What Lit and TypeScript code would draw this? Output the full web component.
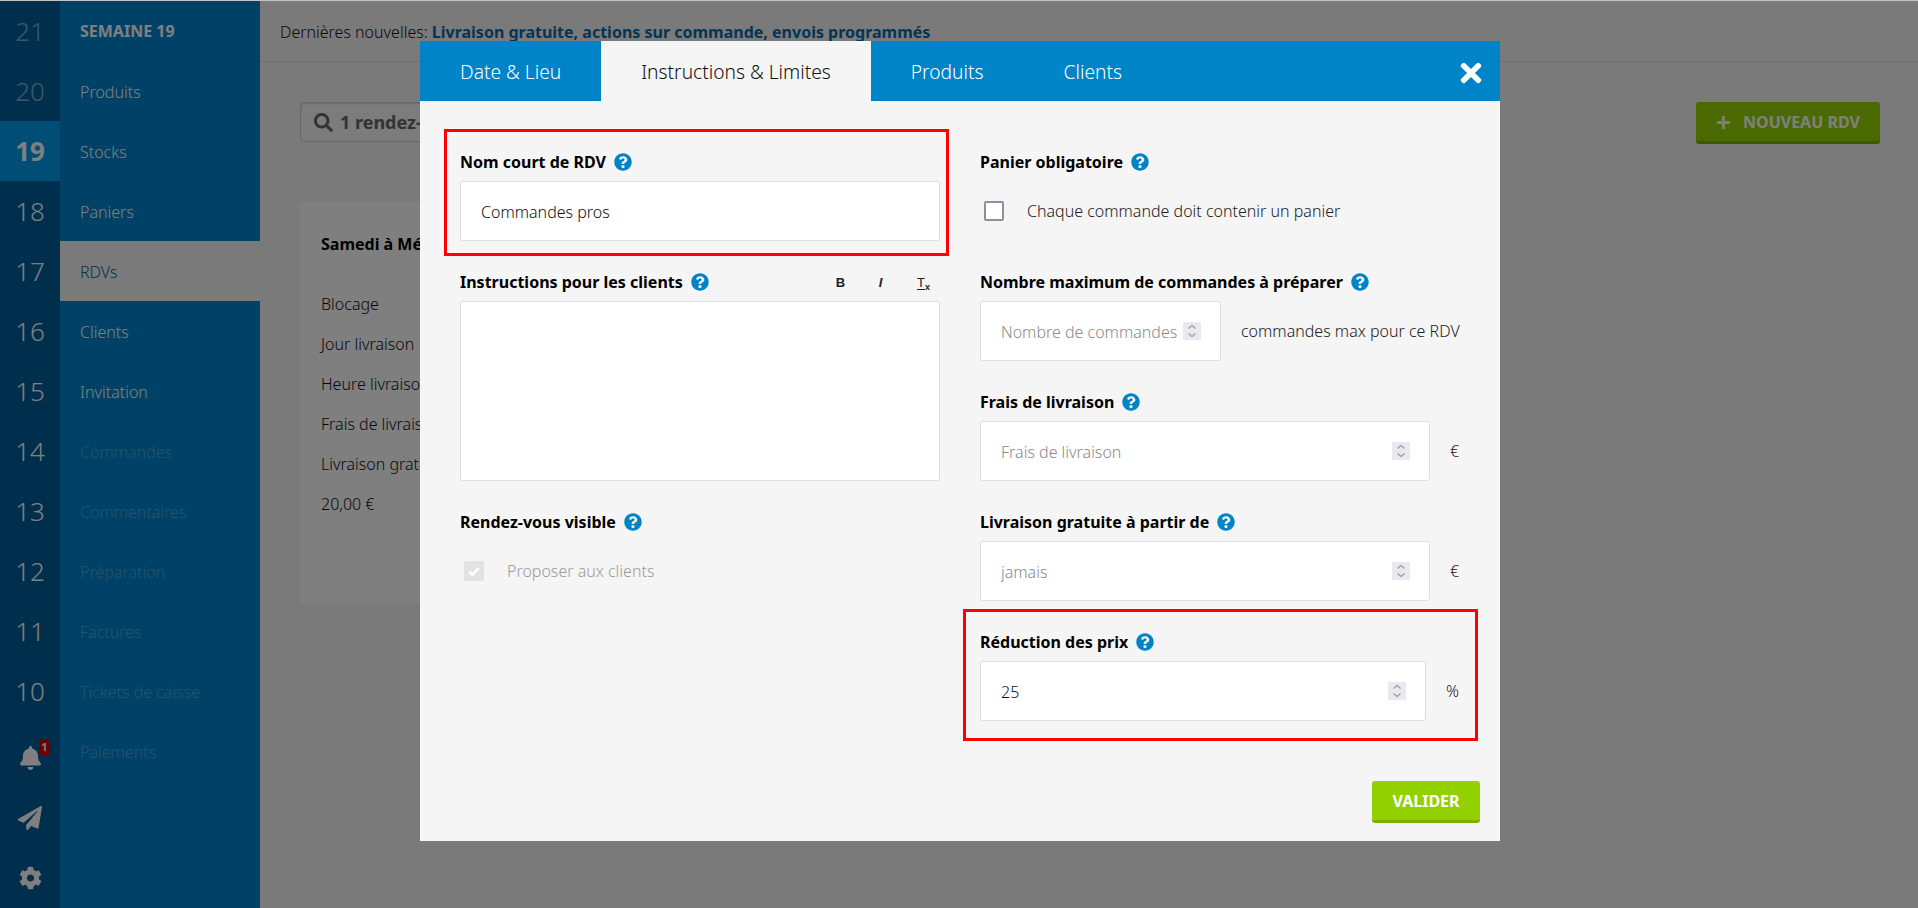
import { LitElement, html, css, svg } from "lit";
import { customElement } from "lit/decorators.js";

const Q = "M504 256c0 136.997-111.043 248-248 248S8 392.997 8 256C8 119.083 119.043 8 256 8s248 111.083 248 248zM262.655 90c-54.497 0-89.255 22.957-116.549 63.758-3.536 5.286-2.353 12.415 2.715 16.258l34.699 26.31c5.205 3.947 12.621 3.008 16.665-2.122 17.864-22.658 30.113-35.797 57.303-35.797 20.429 0 45.698 13.148 45.698 32.958 0 14.976-12.363 22.667-32.534 33.976C247.128 238.528 216 254.941 216 296v4c0 6.627 5.373 12 12 12h56c6.627 0 12-5.373 12-12v-1.333c0-28.462 83.186-29.647 83.186-106.667 0-58.002-60.165-102-116.531-102zM256 338c-25.365 0-46 20.635-46 46 0 25.364 20.635 46 46 46s46-20.636 46-46c0-25.365-20.635-46-46-46z";
const BELL = "M224 512c35.32 0 63.97-28.65 63.97-64H160.03c0 35.35 28.65 64 63.97 64zm215.39-149.71c-19.32-20.76-55.47-51.99-55.47-154.29 0-77.7-54.48-139.9-127.94-155.16V32c0-17.67-14.32-32-31.98-32s-31.98 14.33-31.98 32v20.84C118.56 68.1 64.08 130.3 64.08 208c0 102.3-36.15 133.53-55.47 154.29-6 6.45-8.66 14.16-8.61 21.71.11 16.4 12.98 32 32.1 32h383.8c19.12 0 32-15.6 32.1-32 .05-7.55-2.61-15.27-8.61-21.71z";
const PLANE = "M476 3.2L12.5 270.6c-18.1 10.4-15.8 35.6 2.2 43.2L121 358.4l287.3-253.2c5.5-4.9 13.3 2.6 8.6 8.3L176 407v80.5c0 23.6 28.5 32.9 42.5 15.8L282 426l124.6 52.2c14.2 6 30.4-2.9 33-18.2l72-432C515 7.8 493.3-6.8 476 3.2z";
const COG = "M487.4 315.7l-42.6-24.6c4.3-23.2 4.3-47 0-70.2l42.6-24.6c4.9-2.8 7.1-8.6 5.5-14-11.1-35.6-30-67.8-54.7-94.6-3.8-4.1-10-5.1-14.8-2.3L380.8 110c-17.9-15.4-38.5-27.3-60.8-35.1V25.8c0-5.6-3.9-10.5-9.4-11.7-36.7-8.2-74.3-7.8-109.2 0-5.5 1.2-9.4 6.1-9.4 11.7V75c-22.2 7.9-42.8 19.8-60.8 35.1L88.7 85.5c-4.9-2.8-11-1.9-14.8 2.3-24.7 26.7-43.6 58.9-54.7 94.6-1.7 5.4.6 11.2 5.5 14L67.3 221c-4.3 23.2-4.3 47 0 70.2l-42.6 24.6c-4.9 2.8-7.1 8.6-5.5 14 11.1 35.6 30 67.8 54.7 94.6 3.8 4.1 10 5.1 14.8 2.3l42.6-24.6c17.9 15.4 38.5 27.3 60.8 35.1v49.2c0 5.6 3.9 10.5 9.4 11.7 36.7 8.2 74.3 7.8 109.2 0 5.5-1.2 9.4-6.1 9.4-11.7v-49.2c22.2-7.9 42.8-19.8 60.8-35.1l42.6 24.6c4.9 2.8 11 1.9 14.8-2.3 24.7-26.7 43.6-58.9 54.7-94.6 1.5-5.5-.7-11.3-5.6-14.1zM256 336c-44.1 0-80-35.9-80-80s35.9-80 80-80 80 35.9 80 80-35.9 80-80 80z";
const SEARCH = "M505 442.7L405.3 343c-4.5-4.5-10.6-7-17-7H372c27.6-35.3 44-79.7 44-128C416 93.1 322.9 0 208 0S0 93.1 0 208s93.1 208 208 208c48.3 0 92.7-16.4 128-44v16.3c0 6.4 2.5 12.5 7 17l99.7 99.7c9.4 9.4 24.6 9.4 33.9 0l28.3-28.3c9.4-9.4 9.4-24.6.1-34zM208 336c-70.7 0-128-57.2-128-128 0-70.7 57.2-128 128-128 70.7 0 128 57.2 128 128 0 70.7-57.2 128-128 128z";
const TIMES = "M242.72 256l100.07-100.07c12.28-12.28 12.28-32.19 0-44.48l-22.24-22.24c-12.28-12.28-32.19-12.28-44.48 0L176 189.28 75.93 89.21c-12.28-12.28-32.19-12.28-44.48 0L9.21 111.45c-12.28 12.28-12.28 32.19 0 44.48L109.28 256 9.21 356.07c-12.28 12.28-12.28 32.19 0 44.48l22.24 22.24c12.28 12.28 32.2 12.28 44.48 0L176 322.72l100.07 100.07c12.28 12.28 32.2 12.28 44.48 0l22.24-22.24c12.28-12.28 12.28-32.19 0-44.48L242.72 256z";

const icon = (d: string, vb: string, cls: string) =>
  html`<svg class=${cls} viewBox=${vb} aria-hidden="true">${svg`<path fill="currentColor" d=${d}></path>`}</svg>`;
const help = () => icon(Q, "0 0 512 512", "help");
const spinner = () => html`<span class="spin"><svg viewBox="0 0 18 18" aria-hidden="true"><path d="M5.5 6.5L9 3.5l3.5 3M5.5 11.5L9 14.5l3.5-3" fill="none" stroke="#a2a2a8" stroke-width="1.5"></path></svg></span>`;
const num = (value: string, placeholder: string) =>
  html`<input type="number" .value=${value} placeholder=${placeholder} />${spinner()}`;

const WEEKS = [
  { n: "21", cls: "dim" },
  { n: "20", cls: "dim" },
  { n: "19", cls: "current" },
  { n: "18", cls: "" },
  { n: "17", cls: "" },
  { n: "16", cls: "" },
  { n: "15", cls: "" },
  { n: "14", cls: "" },
  { n: "13", cls: "" },
  { n: "12", cls: "" },
  { n: "11", cls: "" },
  { n: "10", cls: "" },
];
const NAV = [
  { t: "SEMAINE 19", cls: "head" },
  { t: "Produits", cls: "" },
  { t: "Stocks", cls: "" },
  { t: "Paniers", cls: "" },
  { t: "RDVs", cls: "active" },
  { t: "Clients", cls: "" },
  { t: "Invitation", cls: "" },
  { t: "Commandes", cls: "off" },
  { t: "Commentaires", cls: "off" },
  { t: "Préparation", cls: "off" },
  { t: "Factures", cls: "off" },
  { t: "Tickets de caisse", cls: "off" },
  { t: "Paiements", cls: "off" },
];

@customElement("app-root")
export class AppRoot extends LitElement {
  static styles = css`
    :host {
      display: block;
      height: 908px;
      overflow: hidden;
      position: relative;
      font-family: "Noto Sans", sans-serif;
      font-size: 16px;
      font-weight: 300;
      color: #111;
      background: #f5f5f5;
      border-top: 1px solid #c4c4c4;
      box-sizing: border-box;
    }
    * { box-sizing: border-box; }
    .page { display: flex; height: 907px; }
    .rail { width: 60px; background: #005e9c; display: flex; flex-direction: column; color: #fff; }
    .week { height: 60px; display: flex; align-items: center; justify-content: center; font-size: 26px; }
    .week.dim { color: rgba(255, 255, 255, 0.5); }
    .week.current { background: #009cec; font-weight: 700; }
    .tools { margin-top: auto; display: flex; flex-direction: column; }
    .tool { height: 60px; display: flex; align-items: center; justify-content: center; position: relative; color: #fff; }
    .tool svg { display: block; }
    .i-bell { width: 21px; height: 24px; }
    .i-plane { width: 24px; height: 24px; }
    .i-cog { width: 23px; height: 24px; }
    .badge {
      position: absolute; left: 39px; top: 11px; width: 11px; height: 16px; border-radius: 3px;
      background: #e00000; color: #fff; font: 700 11px/16px "Noto Sans", sans-serif; text-align: center;
    }
    .nav { width: 200px; background: #0084ce; display: flex; flex-direction: column; }
    .nav div { height: 60px; line-height: 62px; padding-left: 20px; color: #fff; font-size: 16px; }
    .nav .head { font-weight: 700; font-size: 16px; line-height: 60px; }
    .nav .active { background: #f5f5f5; color: #0a5f94; }
    .nav .off { color: rgba(255, 255, 255, 0.3); }
    .main { flex: 1; display: flex; flex-direction: column; min-width: 0; }
    .news { height: 61px; padding-left: 20px; line-height: 62px; border-bottom: 1px solid #ddd; font-size: 16px; color: #111; }
    .news b { font-weight: 700; color: #0a6aa8; }
    .bar { display: flex; justify-content: space-between; align-items: flex-start; padding: 40px 38px 0 40px; }
    .search {
      width: 300px; height: 40px; display: flex; align-items: center; gap: 7px; padding-left: 13px;
      background: #f8f8f8; border: 1px solid #d0d0d0; border-radius: 4px; box-shadow: inset 0 1px 2px rgba(0,0,0,.15);
      font: 700 18px "Noto Sans", sans-serif; color: #666;
    }
    .search svg { width: 19px; height: 19px; color: #666; }
    .new {
      width: 184px; height: 42px; display: flex; align-items: center; justify-content: center; gap: 12px;
      background: #95d500; border-bottom: 3px solid #7bb300; border-radius: 3px;
      color: #fff; font: 700 16px "Noto Sans", sans-serif;
    }
    .new i { font-style: normal; font-size: 26px; line-height: 20px; font-weight: 700; }
    .card { margin: 58px 0 0 40px; width: 1000px; height: 401px; background: #fff; padding: 22px 21px; }
    .card h3 { margin: 0 0 20px; height: 40px; font: 700 16px/40px "Noto Sans", sans-serif; color: #000; }
    .card p { margin: 0; height: 40px; line-height: 40px; }

    .overlay { position: absolute; inset: 0; background: rgba(0, 0, 0, 0.5); }
    .modal {
      position: absolute; left: 420px; top: 40px; width: 1080px; height: 800px;
      background: #f5f5f5; display: flex; flex-direction: column;
    }
    .tabs { height: 60px; background: #0084c8; display: flex; align-items: stretch; position: relative; flex: none; }
    .tab { padding: 0 40px; line-height: 62px; font-size: 19.2px; color: #fff; }
    .tab.on { background: #f5f5f5; color: #111; }
    .close { position: absolute; right: 18px; top: 17px; width: 22px; height: 30px; color: #fff; }
    .body { position: relative; flex: 1; display: grid; grid-template-columns: 480px 480px; column-gap: 40px; padding: 40px 40px 0; align-content: start; }
    .col { display: flex; flex-direction: column; gap: 20px; }
    .label {
      height: 40px; display: flex; align-items: center; gap: 8px; padding-top: 2px;
      font: 700 16px "Noto Sans", sans-serif; color: #000;
    }
    .help { width: 18px; height: 18px; color: #0084c8; flex: none; }
    .tb { margin-left: auto; display: flex; font-size: 13px; color: #222; margin-right: -1px; }
    .tb span { text-align: center; font-family: "Liberation Sans", sans-serif; font-weight: 700; }
    .tb .bd { width: 29px; }
    .tb .it { font-style: italic; width: 51px; }
    .tb .tx { font-weight: 400; width: 35px; }
    .tb u { text-underline-offset: 2px; }
    .tb sub { font-size: 9px; font-weight: 700; vertical-align: -3px; line-height: 0; }
    input[type="text"], input[type="number"], .area {
      display: block; width: 100%; height: 60px; padding: 2px 20px 0; background: #fff;
      border: 1px solid #ddd; border-radius: 3px; outline: none; margin: 0;
      font: 300 16px "Noto Sans", sans-serif; color: #111;
    }
    input[type="number"] { appearance: textfield; }
    input[type="number"]::-webkit-inner-spin-button { display: none; }
    .area { height: 180px; }
    input::placeholder { color: #8a8a8a; opacity: 1; }
    .check { height: 60px; display: flex; align-items: center; gap: 23px; padding-left: 4px; color: #222; }
    .box { width: 20px; height: 20px; flex: none; background: #fff; border: 2px solid #8f8fa0; border-radius: 2px; }
    .box.ticked { background: #e2e2e2; border: none; color: #fff; display: flex; align-items: center; justify-content: center; }
    .box.ticked svg { width: 16px; height: 16px; }
    .check.off { color: #9a9a9a; }
    .row { display: flex; align-items: center; }
    .row .u { padding-left: 20px; white-space: nowrap; color: #222; }
    .field { position: relative; flex: none; }
    .spin { position: absolute; right: 20px; top: 21px; width: 18px; height: 18px; background: #e9e9ef; }
    .spin svg { display: block; width: 18px; height: 18px; }
    .w-max { width: 241px; }
    .w-eur { width: 450px; }
    .w-pct { width: 446px; }
    .ok {
      position: absolute; left: 952px; top: 680px; width: 108px; height: 42px;
      background: #93d000; border: none; border-bottom: 3px solid #7db000; border-radius: 3px;
      color: #fff; font: 700 16px "Noto Sans", sans-serif; padding: 1px 0 0;
    }
    .mark { position: absolute; border: 3px solid #ff0000; pointer-events: none; }
    .m1 { left: 24px; top: 28px; width: 505px; height: 127px; }
    .m2 { left: 543px; top: 508px; width: 515px; height: 132px; }
  `;

  render() {
    return html`
      <div class="page">
        <aside class="rail">
          ${WEEKS.map((w) => html`<div class="week ${w.cls}">${w.n}</div>`)}
          <div class="tools">
            <div class="tool">${icon(BELL, "0 0 448 512", "i-bell")}<span class="badge">1</span></div>
            <div class="tool">${icon(PLANE, "0 0 512 512", "i-plane")}</div>
            <div class="tool">${icon(COG, "0 0 512 512", "i-cog")}</div>
          </div>
        </aside>
        <nav class="nav">${NAV.map((n) => html`<div class=${n.cls}>${n.t}</div>`)}</nav>
        <main class="main">
          <div class="news">Dernières nouvelles: <b>Livraison gratuite, actions sur commande, envois programmés</b></div>
          <div class="bar">
            <div class="search">${icon(SEARCH, "0 0 512 512", "")}<span>1 rendez-vous</span></div>
            <div class="new"><i>+</i><span>NOUVEAU RDV</span></div>
          </div>
          <section class="card">
            <h3>Samedi à Méru</h3>
            <p>Blocage</p>
            <p>Jour livraison</p>
            <p>Heure livraison</p>
            <p>Frais de livraison</p>
            <p>Livraison gratuite</p>
            <p>20,00 €</p>
          </section>
        </main>
      </div>
      <div class="overlay"></div>
      <div class="modal">
        <div class="tabs">
          <div class="tab">Date &amp; Lieu</div>
          <div class="tab on">Instructions &amp; Limites</div>
          <div class="tab">Produits</div>
          <div class="tab">Clients</div>
          ${icon(TIMES, "0 0 352 512", "close")}
        </div>
        <div class="body">
          <div class="col">
            <div>
              <div class="label">Nom court de RDV ${help()}</div>
              <input type="text" value="Commandes pros" />
            </div>
            <div>
              <div class="label">
                Instructions pour les clients ${help()}
                <div class="tb"><span class="bd">B</span><span class="it">I</span><span class="tx"><u>T</u><sub>x</sub></span></div>
              </div>
              <div class="area"></div>
            </div>
            <div>
              <div class="label">Rendez-vous visible ${help()}</div>
              <div class="check off">
                <span class="box ticked"><svg viewBox="0 0 16 16"><path d="M3 8.5l3.2 3.2L13 4.8" fill="none" stroke="currentColor" stroke-width="2.4"></path></svg></span>
                <span>Proposer aux clients</span>
              </div>
            </div>
          </div>
          <div class="col">
            <div>
              <div class="label">Panier obligatoire ${help()}</div>
              <div class="check"><span class="box"></span><span>Chaque commande doit contenir un panier</span></div>
            </div>
            <div>
              <div class="label">Nombre maximum de commandes à préparer ${help()}</div>
              <div class="row">
                <div class="field w-max">${num("", "Nombre de commandes")}</div>
                <span class="u">commandes max pour ce RDV</span>
              </div>
            </div>
            <div>
              <div class="label">Frais de livraison ${help()}</div>
              <div class="row">
                <div class="field w-eur">${num("", "Frais de livraison")}</div>
                <span class="u">€</span>
              </div>
            </div>
            <div>
              <div class="label">Livraison gratuite à partir de ${help()}</div>
              <div class="row">
                <div class="field w-eur">${num("", "jamais")}</div>
                <span class="u">€</span>
              </div>
            </div>
            <div>
              <div class="label">Réduction des prix ${help()}</div>
              <div class="row">
                <div class="field w-pct">${num("25", "")}</div>
                <span class="u">%</span>
              </div>
            </div>
          </div>
          <button class="ok">VALIDER</button>
          <div class="mark m1"></div>
          <div class="mark m2"></div>
        </div>
      </div>
    `;
  }
}
